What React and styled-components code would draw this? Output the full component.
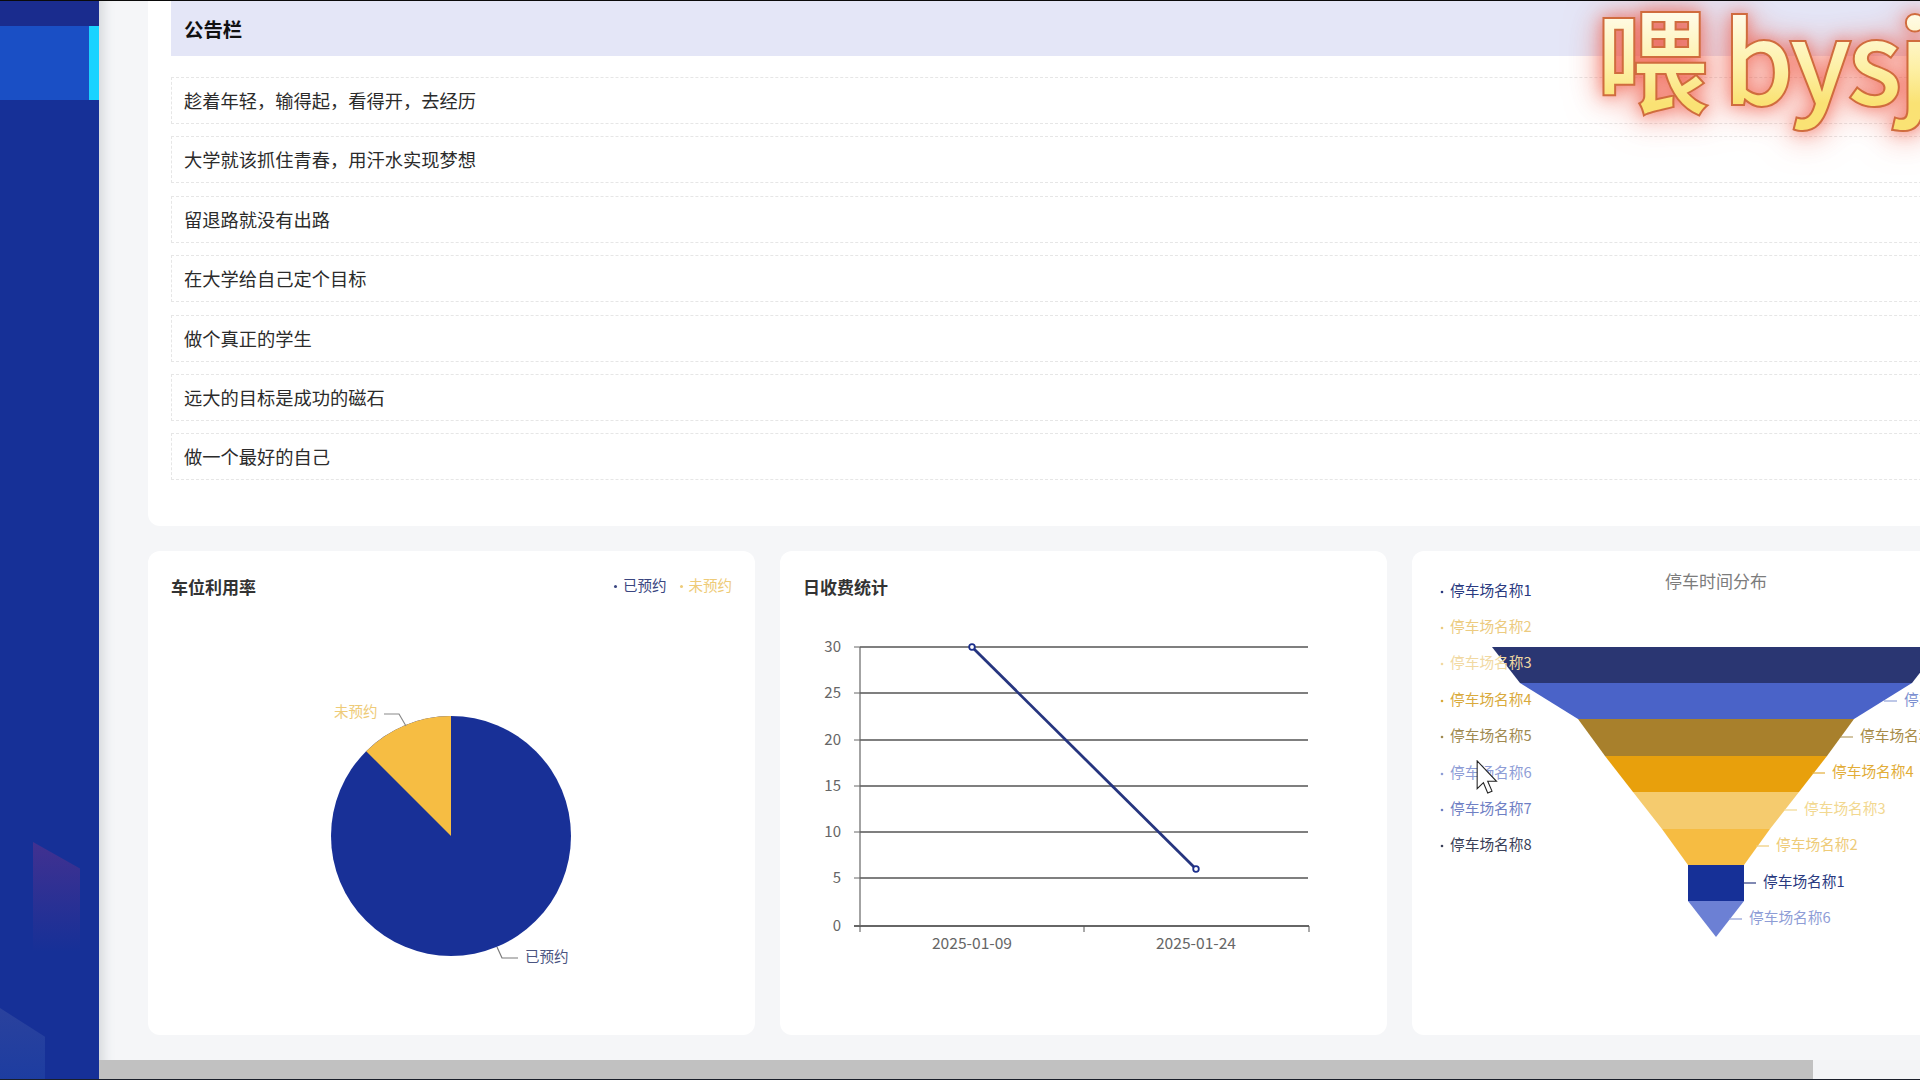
import React from 'react';
import styled, { createGlobalStyle } from 'styled-components';

const notices = [
  '趁着年轻，输得起，看得开，去经历',
  '大学就该抓住青春，用汗水实现梦想',
  '留退路就没有出路',
  '在大学给自己定个目标',
  '做个真正的学生',
  '远大的目标是成功的磁石',
  '做一个最好的自己',
];

const legendItems = [
  { name: '停车场名称1', color: '#2a3a80', y: 591 },
  { name: '停车场名称2', color: '#eccb80', y: 627 },
  { name: '停车场名称3', color: '#f1d9a2', y: 663 },
  { name: '停车场名称4', color: '#d9aa3c', y: 700 },
  { name: '停车场名称5', color: '#a08a50', y: 736 },
  { name: '停车场名称6', color: '#8e9dd6', y: 773 },
  { name: '停车场名称7', color: '#6f80c4', y: 809 },
  { name: '停车场名称8', color: '#3a3f58', y: 845 },
];

const FUNNEL_X = 1717;
const funnel = [
  { top: 224, bottom: 196, y0: 647, y1: 683, color: '#2a3672' },
  { top: 196, bottom: 138, y0: 683, y1: 719, color: '#4a63c8', label: '停车场名称7', textColor: '#7c8fd0', lx: 1885, ty: 700 },
  { top: 138, bottom: 111, y0: 719, y1: 756, color: '#a8802c', label: '停车场名称5', textColor: '#a88c48', lx: 1841, ty: 736 },
  { top: 111, bottom: 83, y0: 756, y1: 792, color: '#e8a00c', label: '停车场名称4', textColor: '#e2ad38', lx: 1813, ty: 772 },
  { top: 83, bottom: 54, y0: 792, y1: 829, color: '#f5cb6e', label: '停车场名称3', textColor: '#f2d890', lx: 1785, ty: 809 },
  { top: 54, bottom: 28, y0: 829, y1: 865, color: '#f6bc42', label: '停车场名称2', textColor: '#eecb78', lx: 1757, ty: 845 },
  { top: 28, bottom: 28, y0: 865, y1: 901, color: '#163097', label: '停车场名称1', textColor: '#2a3a80', lx: 1744, ty: 882 },
  { top: 28, bottom: 0, y0: 901, y1: 937, color: '#6c80d4', label: '停车场名称6', textColor: '#8e9dd6', lx: 1730, ty: 918 },
];

const yTicks = [
  { label: '30', y: 647 },
  { label: '25', y: 693 },
  { label: '20', y: 740 },
  { label: '15', y: 786 },
  { label: '10', y: 832 },
  { label: '5', y: 878 },
  { label: '0', y: 926 },
];

function PieChart() {
  return (
    <ChartSvg viewBox="148 611 607 424" $height={424}>
      <circle cx="451" cy="836" r="120" fill="#183097" />
      <path d="M451 836 L451 716 A120 120 0 0 0 366.15 751.15 Z" fill="#f6bd43" />
      <polyline points="384,714 399,714 406,726" fill="none" stroke="#8a8a8a" strokeWidth="1.2" />
      <polyline points="497,947 502,958 518,958" fill="none" stroke="#7a7a7a" strokeWidth="1.2" />
      <ChartText x="334" y="712" fill="#eecb78" fontSize="14.5">未预约</ChartText>
      <ChartText x="525" y="957" fill="#4a5480" fontSize="14.5">已预约</ChartText>
    </ChartSvg>
  );
}

function LineChart() {
  return (
    <ChartSvg viewBox="780 611 607 424" $height={424}>
      {yTicks.slice(0, -1).map((t) => (
        <line key={t.label} x1="860" x2="1308" y1={t.y} y2={t.y} stroke="#7f7f7f" strokeWidth="1.8" />
      ))}
      {yTicks.map((t) => (
        <g key={t.label}>
          <line x1="854" x2="860" y1={t.y} y2={t.y} stroke="#666" />
          <ChartText x="841" y={t.y} fill="#666" fontSize="15" textAnchor="end">{t.label}</ChartText>
        </g>
      ))}
      <line x1="860" x2="860" y1="647" y2="926" stroke="#666" strokeWidth="1.2" />
      <line x1="854" x2="1309" y1="926" y2="926" stroke="#666" strokeWidth="1.8" />
      {[860, 1084, 1309].map((x) => (
        <line key={x} x1={x} x2={x} y1="926" y2="932" stroke="#555" />
      ))}
      <ChartText x="972" y="943" fill="#666" fontSize="15.6" textAnchor="middle">2025-01-09</ChartText>
      <ChartText x="1196" y="943" fill="#666" fontSize="15.6" textAnchor="middle">2025-01-24</ChartText>
      <line x1="972" y1="647" x2="1196" y2="869" stroke="#26357f" strokeWidth="2.8" />
      <circle cx="972" cy="647" r="2.8" fill="#fff" stroke="#1c2f8c" strokeWidth="1.8" />
      <circle cx="1196" cy="869" r="2.8" fill="#fff" stroke="#1c2f8c" strokeWidth="1.8" />
    </ChartSvg>
  );
}

function FunnelChart() {
  return (
    <ChartSvg viewBox="1413 551 607 484" $height={484}>
      <ChartText x={FUNNEL_X} y="582" fill="#7c7c7c" fontSize="17" textAnchor="middle">停车时间分布</ChartText>
      {funnel.map((s) => (
        <polygon
          key={s.y0}
          fill={s.color}
          points={`${FUNNEL_X - s.top},${s.y0} ${FUNNEL_X + s.top},${s.y0} ${FUNNEL_X + s.bottom},${s.y1} ${FUNNEL_X - s.bottom},${s.y1}`}
        />
      ))}
      {funnel.filter((s) => s.label).map((s) => (
        <g key={s.label}>
          <line x1={s.lx} x2={s.lx + 13} y1={s.ty + 1} y2={s.ty + 1} stroke={s.textColor} strokeWidth="1.2" />
          <ChartText x={s.lx + 20} y={s.ty} fill={s.textColor} fontSize="14.7">{s.label}</ChartText>
        </g>
      ))}
      {legendItems.map((l) => (
        <g key={l.name}>
          <circle cx="1443" cy={l.y + 1} r="1.3" fill={l.color} />
          <ChartText x="1451" y={l.y} fill={l.color} fontSize="14.7">{l.name}</ChartText>
        </g>
      ))}
    </ChartSvg>
  );
}

function App() {
  return (
    <Frame>
      <GlobalStyle />
      <Sidebar>
        <SideTop />
        <SideActive />
        <ShapePurple />
        <ShapeBlue />
      </Sidebar>
      <Main>
        <Content>
          <Panel>
            <PanelHead>公告栏</PanelHead>
            <NoticeList>
              {notices.map((n) => (
                <NoticeRow key={n}>{n}</NoticeRow>
              ))}
            </NoticeList>
          </Panel>
          <CardRow>
            <Card>
              <CardHead>
                <CardTitle>车位利用率</CardTitle>
                <Legend>
                  <LegendItem $color="#3a4680">已预约</LegendItem>
                  <LegendItem $color="#eecb78">未预约</LegendItem>
                </Legend>
              </CardHead>
              <PieChart />
            </Card>
            <Card>
              <CardHead>
                <CardTitle>日收费统计</CardTitle>
              </CardHead>
              <LineChart />
            </Card>
            <Card>
              <FunnelChart />
            </Card>
          </CardRow>
        </Content>
        <ScrollTrack>
          <ScrollThumb />
        </ScrollTrack>
      </Main>
      <Watermark data-text="喂 bysj">喂 bysj</Watermark>
      <Cursor viewBox="0 0 12 19">
        <path d="M.5.5V16L4 12.7 6.4 18.4 8.8 17.4 6.4 11.9H11.3Z" fill="#fff" stroke="#222" strokeWidth=".6" />
      </Cursor>
    </Frame>
  );
}

const GlobalStyle = createGlobalStyle`
  html, body {
    margin: 0;
    padding: 0;
    overflow: hidden;
  }
  body {
    font-family: "Noto Sans CJK SC", "Liberation Sans", sans-serif;
  }
`;

const Frame = styled.div`
  position: relative;
  display: flex;
  width: 1920px;
  height: 1080px;
  box-sizing: border-box;
  border-top: 1px solid #0a0a0a;
  border-bottom: 1px solid #1a1f2a;
  overflow: hidden;
  background: #f5f6f8;
`;

const Sidebar = styled.aside`
  position: relative;
  flex: 0 0 99px;
  background: #163097;
  overflow: hidden;
`;

const SideTop = styled.div`
  height: 25px;
  background: #1a2c8e;
`;

const SideActive = styled.div`
  height: 74px;
  box-sizing: border-box;
  background: #1a4fc5;
  border-right: 10px solid #19d3ff;
`;

const ShapePurple = styled.div`
  position: absolute;
  left: 33px;
  top: 841px;
  width: 47px;
  height: 110px;
  clip-path: polygon(0 0, 100% 24%, 100% 100%, 0 100%);
  background: linear-gradient(180deg, rgba(125, 50, 135, 0.42), rgba(125, 50, 135, 0));
`;

const ShapeBlue = styled.div`
  position: absolute;
  left: 0;
  top: 1007px;
  width: 45px;
  height: 72px;
  clip-path: polygon(0 0, 100% 40%, 100% 100%, 0 100%);
  background: linear-gradient(180deg, rgba(70, 90, 165, 0.42), rgba(40, 80, 175, 0.4));
`;

const Main = styled.main`
  flex: 1;
  min-width: 0;
  display: flex;
  flex-direction: column;
  justify-content: space-between;
  box-shadow: inset 14px 0 12px -10px rgba(90, 100, 110, 0.22);
`;

const Content = styled.div`
  width: 1872px;
  margin-left: 49px;
  display: flex;
  flex-direction: column;
  gap: 25px;
`;

const Panel = styled.section`
  height: 525px;
  box-sizing: border-box;
  padding: 0 23px;
  background: #fff;
  border-radius: 0 0 12px 12px;
`;

const PanelHead = styled.h2`
  margin: 0;
  height: 55px;
  padding-left: 13px;
  display: flex;
  align-items: center;
  background: #e4e6f7;
  color: #111;
  font-size: 19.4px;
  font-weight: 700;
`;

const NoticeList = styled.ul`
  margin: 21px 0 0;
  padding: 0;
  list-style: none;
  display: flex;
  flex-direction: column;
  gap: 12.4px;
`;

const NoticeRow = styled.li`
  height: 47px;
  box-sizing: border-box;
  padding: 0 0 1px 12px;
  display: flex;
  align-items: center;
  border: 1px dashed #e6e6e6;
  color: #2b2b2b;
  font-size: 18.25px;
`;

const CardRow = styled.div`
  display: flex;
  gap: 25px;
`;

const Card = styled.div`
  flex: 0 0 607px;
  height: 484px;
  background: #fff;
  border-radius: 12px;
  overflow: hidden;
`;

const CardHead = styled.div`
  height: 60px;
  box-sizing: border-box;
  padding: 24px 23px 0 23px;
  display: flex;
  justify-content: space-between;
  align-items: flex-start;
`;

const CardTitle = styled.h3`
  margin: 0;
  font-size: 17px;
  line-height: 24px;
  font-weight: 700;
  color: #333;
`;

const Legend = styled.div`
  display: flex;
  gap: 13px;
  margin-top: -1px;
`;

const LegendItem = styled.span`
  position: relative;
  padding-left: 9px;
  font-size: 14.5px;
  line-height: 22px;
  color: ${(p) => p.$color};
  &::before {
    content: '';
    position: absolute;
    left: 0;
    top: 11px;
    width: 3px;
    height: 3px;
    border-radius: 50%;
    background: ${(p) => p.$color};
  }
`;

const ChartSvg = styled.svg`
  display: block;
  width: 607px;
  height: ${(p) => p.$height}px;
`;

const ChartText = styled.text`
  font-family: "Noto Sans CJK SC", "Liberation Sans", sans-serif;
  dominant-baseline: central;
  transform: translateY(-1.5px);
`;

const ScrollTrack = styled.div`
  height: 19px;
  background: #f3f4f6;
`;

const ScrollThumb = styled.div`
  width: 1714px;
  height: 100%;
  background: #c1c1c1;
`;

const Watermark = styled.div`
  position: absolute;
  left: 1596px;
  top: -26px;
  font-size: 112px;
  line-height: 160px;
  font-weight: 500;
  letter-spacing: -3px;
  word-spacing: -4px;
  white-space: nowrap;
  color: #d06c3e;
  -webkit-text-stroke: 4px #d06c3e;
  filter: drop-shadow(0 0 8px rgba(238, 85, 65, 0.6)) drop-shadow(0 3px 16px rgba(238, 85, 65, 0.6));
  &::after {
    content: attr(data-text);
    position: absolute;
    left: 0;
    top: 0;
    -webkit-text-stroke: 0;
    background: linear-gradient(180deg, #fffbe6 25%, #fdf0a6 58%, #fae274 80%);
    -webkit-background-clip: text;
    background-clip: text;
    -webkit-text-fill-color: transparent;
  }
`;

const Cursor = styled.svg`
  position: absolute;
  left: 1475px;
  top: 759px;
  width: 24px;
  height: 34px;
`;

export default App;
